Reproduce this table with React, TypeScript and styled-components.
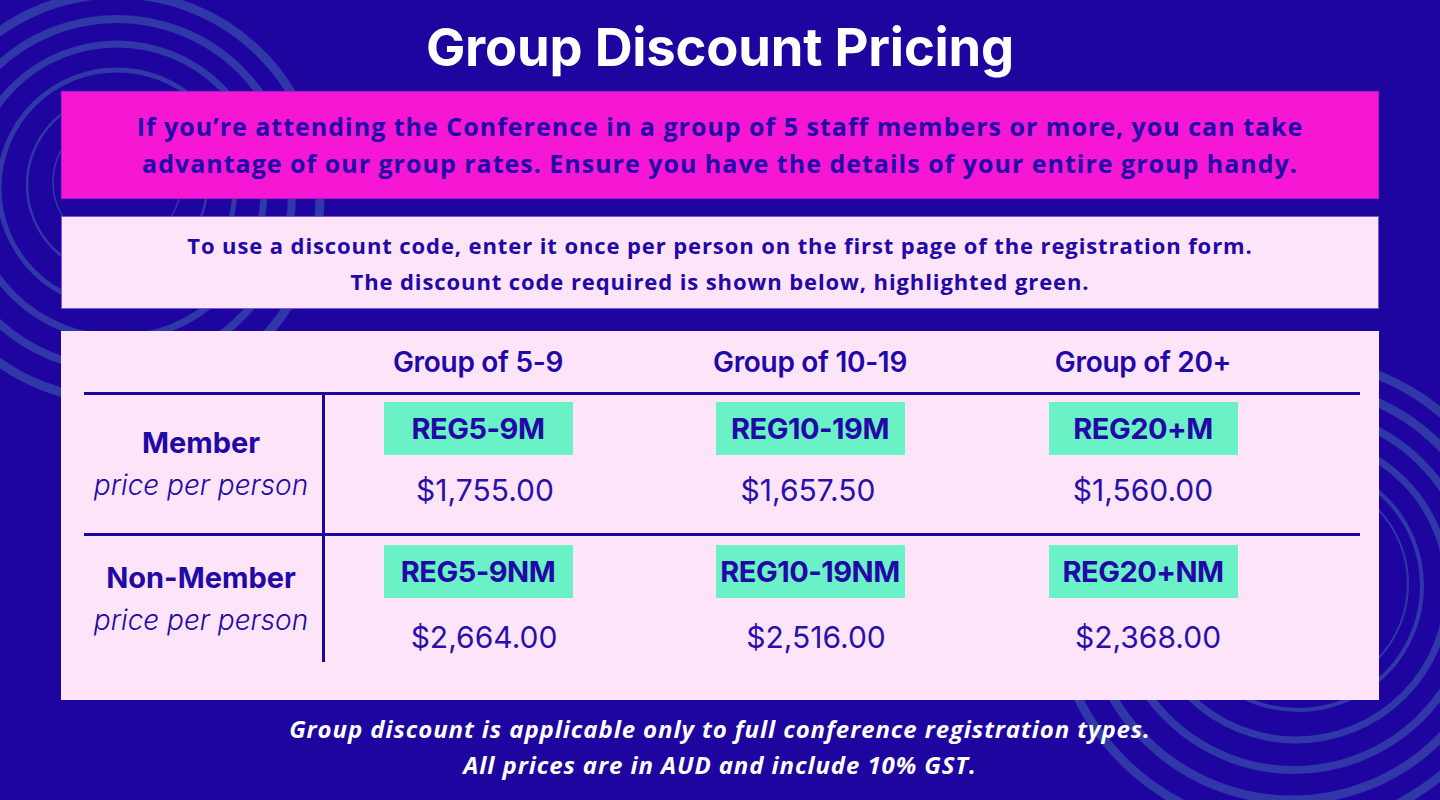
import React from 'react'
import styled, { createGlobalStyle } from 'styled-components'

const INK = '#2208a6'
const BG = '#1e05a0'
const RING = '#3038a9'

const GlobalStyle = createGlobalStyle`
  html, body {
    margin: 0;
    padding: 0;
    background: ${BG};
  }
  body {
    font-family: 'Open Sans', 'Liberation Sans', sans-serif;
  }
`

const Page = styled.div`
  position: relative;
  width: 1440px;
  height: 800px;
  overflow: hidden;
  background: ${BG};
  display: flex;
  flex-direction: column;
  align-items: center;
  padding-top: 17px;
  box-sizing: border-box;
`

const Rings = styled.svg`
  position: absolute;
  inset: 0;
  width: 1440px;
  height: 800px;
  pointer-events: none;
`

const Content = styled.div`
  position: relative;
  display: flex;
  flex-direction: column;
  align-items: center;
  width: 100%;
`

const Title = styled.h1`
  margin: 0 0 14px;
  font-family: Inter, 'Open Sans', sans-serif;
  font-weight: 700;
  font-size: 52.5px;
  line-height: 60px;
  color: #ffffff;
  letter-spacing: -0.2px;
`

const Banner = styled.div<{ $tone: 'hot' | 'soft' }>`
  width: 1318px;
  box-sizing: border-box;
  height: ${({ $tone }) => ($tone === 'hot' ? '108px' : '93px')};
  margin-bottom: ${({ $tone }) => ($tone === 'hot' ? '17px' : '22px')};
  display: flex;
  flex-direction: column;
  align-items: center;
  justify-content: center;
  background: ${({ $tone }) => ($tone === 'hot' ? '#f517d4' : '#fde4f8')};
  border: 1px solid ${({ $tone }) => ($tone === 'hot' ? '#b414c8' : '#7a5ad6')};
  color: ${INK};
  font-weight: 700;
  text-align: center;
  font-size: ${({ $tone }) => ($tone === 'hot' ? '25px' : '22px')};
  letter-spacing: ${({ $tone }) => ($tone === 'hot' ? '1px' : '0.9px')};
  line-height: ${({ $tone }) => ($tone === 'hot' ? '37px' : '36px')};
`

const Panel = styled.div`
  width: 1318px;
  height: 369px;
  box-sizing: border-box;
  background: #fde4f8;
  padding: 0 19px 0 23px;
  font-family: Inter, 'Open Sans', sans-serif;
  color: ${INK};
`

const Row = styled.div<{ $height: number; $rule?: boolean }>`
  display: grid;
  grid-template-columns: 241px 306px 358px 308px 1fr;
  height: ${({ $height }) => $height}px;
  border-bottom: ${({ $rule }) => ($rule ? `3px solid ${BG}` : 'none')};
`

const HeadCell = styled.div`
  display: flex;
  align-items: center;
  justify-content: center;
  font-weight: 600;
  font-size: 28px;
  letter-spacing: -0.3px;
`

const LabelCell = styled.div`
  display: flex;
  flex-direction: column;
  align-items: center;
  justify-content: center;
  border-right: 3px solid ${BG};
  padding-right: 4px;
`

const LabelName = styled.div`
  font-weight: 700;
  font-size: 29px;
  line-height: 42px;
`

const LabelSub = styled.div`
  font-style: italic;
  font-weight: 300;
  font-size: 28px;
  line-height: 42px;
`

const ValueCell = styled.div<{ $top: number }>`
  display: flex;
  flex-direction: column;
  align-items: center;
  padding-top: ${({ $top }) => $top}px;
`

const Code = styled.div`
  width: 189px;
  height: 53px;
  display: flex;
  align-items: center;
  justify-content: center;
  background: #6af2c6;
  font-weight: 700;
  font-size: 29px;
  letter-spacing: -0.5px;
`

const Price = styled.div<{ $gap: number }>`
  margin-top: ${({ $gap }) => $gap}px;
  font-weight: 400;
  font-size: 30px;
  line-height: 34px;
  color: #2a10aa;
`

const Footer = styled.div`
  margin-top: 11px;
  text-align: center;
  color: #ffffff;
  font-style: italic;
  font-weight: 700;
  font-size: 24px;
  letter-spacing: 0.9px;
  line-height: 36px;
`

type Tier = { code: string; price: string; dx: number }

const headers = ['Group of 5-9', 'Group of 10-19', 'Group of 20+']

const rows: { name: string; height: number; top: number; gap: number; tiers: Tier[] }[] = [
  {
    name: 'Member',
    height: 138,
    top: 7,
    gap: 18,
    tiers: [
      { code: 'REG5-9M', price: '$1,755.00', dx: 14 },
      { code: 'REG10-19M', price: '$1,657.50', dx: -4 },
      { code: 'REG20+M', price: '$1,560.00', dx: 0 },
    ],
  },
  {
    name: 'Non-Member',
    height: 126,
    top: 9,
    gap: 22,
    tiers: [
      { code: 'REG5-9NM', price: '$2,664.00', dx: 12 },
      { code: 'REG10-19NM', price: '$2,516.00', dx: 12 },
      { code: 'REG20+NM', price: '$2,368.00', dx: 10 },
    ],
  },
]

function Background() {
  const left = [
    { r: 64, w: 1.5 },
    { r: 90, w: 2.5 },
    { r: 118, w: 5 },
    { r: 147, w: 7 },
    { r: 175, w: 8 },
    { r: 203, w: 9 },
  ]
  const right = [
    { r: 108, w: 2 },
    { r: 124, w: 4 },
    { r: 152, w: 7 },
    { r: 180, w: 8 },
    { r: 208, w: 9 },
    { r: 236, w: 9 },
  ]
  return (
    <Rings viewBox="0 0 1440 800">
      <g fill="none" stroke={RING}>
        {left.map((c, i) => (
          <circle key={'l' + i} cx={117} cy={182 + i * 3} r={c.r} strokeWidth={c.w} />
        ))}
        {right.map((c, i) => (
          <circle key={'r' + i} cx={1300 - i * 2} cy={584 + i * 2} r={c.r} strokeWidth={c.w} />
        ))}
      </g>
    </Rings>
  )
}

export default function App() {
  return (
    <>
      <GlobalStyle />
      <Page>
        <Background />
        <Content>
          <Title>Group Discount Pricing</Title>
          <Banner $tone="hot">
            <div>If you’re attending the Conference in a group of 5 staff members or more, you can take</div>
            <div>advantage of our group rates. Ensure you have the details of your entire group handy.</div>
          </Banner>
          <Banner $tone="soft">
            <div>To use a discount code, enter it once per person on the first page of the registration form.</div>
            <div>The discount code required is shown below, highlighted green.</div>
          </Banner>
          <Panel>
            <Row $height={61} $rule>
              <div />
              {headers.map((h) => (
                <HeadCell key={h}>{h}</HeadCell>
              ))}
            </Row>
            {rows.map((row, ri) => (
              <Row key={row.name} $height={row.height} $rule={ri === 0}>
                <LabelCell>
                  <LabelName>{row.name}</LabelName>
                  <LabelSub>price per person</LabelSub>
                </LabelCell>
                {row.tiers.map((t) => (
                  <ValueCell key={t.code} $top={row.top}>
                    <Code>{t.code}</Code>
                    <Price $gap={row.gap} style={{ marginLeft: t.dx }}>
                      {t.price}
                    </Price>
                  </ValueCell>
                ))}
              </Row>
            ))}
          </Panel>
          <Footer>
            <div>Group discount is applicable only to full conference registration types.</div>
            <div>All prices are in AUD and include 10% GST.</div>
          </Footer>
        </Content>
      </Page>
    </>
  )
}
